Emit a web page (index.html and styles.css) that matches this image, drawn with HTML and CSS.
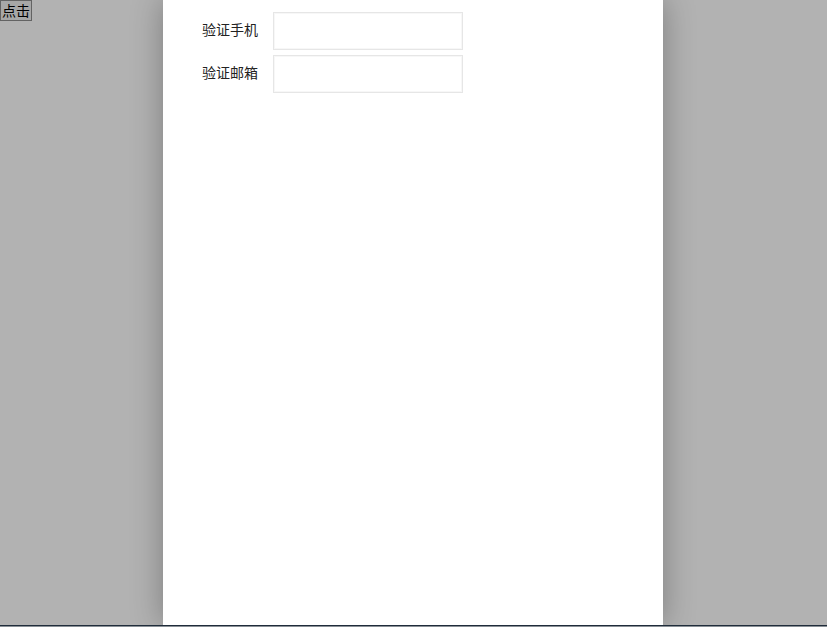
FILE: index.html
```html
<!DOCTYPE html>
<html lang="zh">
<head>
<meta charset="utf-8">
<title>验证</title>
<link rel="stylesheet" href="styles.css">
</head>
<body>
<button class="trigger" type="button">点击</button>
<div class="shade"></div>
<div class="panel">
  <form class="form">
    <div class="form-item">
      <label class="form-label">验证手机</label>
      <input class="form-input" type="text">
    </div>
    <div class="form-item">
      <label class="form-label">验证邮箱</label>
      <input class="form-input" type="text">
    </div>
  </form>
</div>
<div class="taskbar"></div>
</body>
</html>
```
FILE: styles.css
```css
html, body {
  margin: 0;
  padding: 0;
  height: 627px;
  overflow: hidden;
  background: #ffffff;
}
body {
  position: relative;
  font-family: "Noto Sans CJK SC", "Noto Sans", sans-serif;
}
.trigger {
  display: block;
  margin: 0;
  height: 21px;
  padding: 0 1px;
  font-family: "Noto Sans CJK SC", sans-serif;
  font-size: 14px;
  line-height: 19px;
  color: #000;
  background: #efefef;
  border: 1px solid #8f8f8f;
  border-radius: 0;
}
.shade {
  position: absolute;
  top: 0;
  left: 0;
  width: 100%;
  height: 627px;
  background: rgba(0, 0, 0, 0.3);
}
.panel {
  position: absolute;
  top: 0;
  left: 163px;
  width: 500px;
  height: 625px;
  background: #ffffff;
  box-shadow: 0 0 30px rgba(0, 0, 0, 0.3);
  box-sizing: border-box;
  padding-top: 12px;
}
.form {
  display: flex;
  flex-direction: column;
  gap: 5px;
  margin: 0;
}
.form-item {
  display: flex;
  align-items: center;
}
.form-label {
  width: 80px;
  padding: 0 15px 3px;
  text-align: right;
  font-size: 14px;
  line-height: 35px;
  color: #222;
}
.form-input {
  width: 190px;
  height: 38px;
  box-sizing: border-box;
  margin: 0;
  border: 1px solid #e6e6e6;
  background: #fff;
  outline: none;
  box-shadow: inset 0 0 0 1px #f7f7f7;
}
.taskbar {
  position: absolute;
  left: 0;
  top: 625px;
  width: 100%;
  height: 2px;
  background: linear-gradient(#1f2c3a 0 1px, #8a9096 1px 2px);
}
```
